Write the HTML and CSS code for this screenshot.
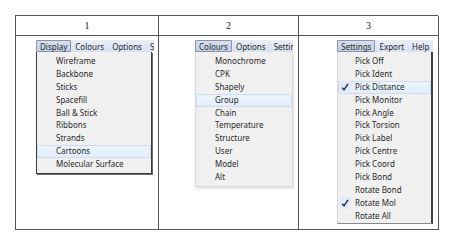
FILE: index.html
```html
<!DOCTYPE html>
<html lang="en">
<head>
    <meta charset="utf-8">
    <title>Menus</title>
    <link rel="stylesheet" href="styles.css">
</head>
<body>
    <div class="grid">
        <div class="head">1</div>
        <div class="head">2</div>
        <div class="head">3</div>

        <div class="cell cell-1">
            <div class="menu menu-1">
                <div class="bar">
                    <span class="top active">Display</span>
                    <span class="top">Colours</span>
                    <span class="top">Options</span>
                    <span class="top">Settings</span>
                </div>
                <div class="drop dark">
                    <div class="item">Wireframe</div>
                    <div class="item">Backbone</div>
                    <div class="item">Sticks</div>
                    <div class="item">Spacefill</div>
                    <div class="item">Ball &amp; Stick</div>
                    <div class="item">Ribbons</div>
                    <div class="item">Strands</div>
                    <div class="item hover">Cartoons</div>
                    <div class="item">Molecular Surface</div>
                </div>
            </div>
        </div>

        <div class="cell cell-2">
            <div class="menu menu-2">
                <div class="bar">
                    <span class="top active">Colours</span>
                    <span class="top">Options</span>
                    <span class="top">Settings</span>
                </div>
                <div class="drop soft">
                    <div class="item">Monochrome</div>
                    <div class="item">CPK</div>
                    <div class="item">Shapely</div>
                    <div class="item hover">Group</div>
                    <div class="item">Chain</div>
                    <div class="item">Temperature</div>
                    <div class="item">Structure</div>
                    <div class="item">User</div>
                    <div class="item">Model</div>
                    <div class="item">Alt</div>
                </div>
            </div>
        </div>

        <div class="cell cell-3">
            <div class="menu menu-3">
                <div class="bar">
                    <span class="top active">Settings</span>
                    <span class="top">Export</span>
                    <span class="top">Help</span>
                </div>
                <div class="drop side">
                    <div class="item">Pick Off</div>
                    <div class="item">Pick Ident</div>
                    <div class="item hover checked"><svg class="check" viewBox="0 0 8 8"><path d="M1 4.6 L3 6.8 L7 0.8" /></svg>Pick Distance</div>
                    <div class="item">Pick Monitor</div>
                    <div class="item">Pick Angle</div>
                    <div class="item">Pick Torsion</div>
                    <div class="item">Pick Label</div>
                    <div class="item">Pick Centre</div>
                    <div class="item">Pick Coord</div>
                    <div class="item">Pick Bond</div>
                    <div class="item">Rotate Bond</div>
                    <div class="item checked"><svg class="check" viewBox="0 0 8 8"><path d="M1 4.6 L3 6.8 L7 0.8" /></svg>Rotate Mol</div>
                    <div class="item">Rotate All</div>
                </div>
            </div>
        </div>
    </div>
</body>
</html>
```
FILE: styles.css
```css
body {
    margin: 0;
    background: #fff;
    font-family: 'Noto Sans', 'Open Sans', Arial, sans-serif;
    color: #2a2a2a;
}
.grid {
    margin: 15px 0 0 15px;
    width: 423px;
    display: grid;
    grid-template-columns: 143px 140px 140px;
    grid-template-rows: 20px 194px;
    border-top: 1px solid #555;
    border-left: 1px solid #555;
    box-sizing: border-box;
}
.head, .cell {
    border-right: 1px solid #555;
    border-bottom: 1px solid #555;
}
.head {
    display: flex;
    align-items: center;
    justify-content: center;
    font-family: 'Liberation Serif', serif;
    font-size: 10px;
    color: #222;
}
.cell {
    padding-top: 4px;
    overflow: hidden;
}
.cell-1 { padding-left: 20px; }
.cell-2 { padding-left: 36px; }
.cell-3 { padding-left: 38px; }
.menu {
    display: flex;
    flex-direction: column;
    font-size: 8px;
}
.menu-1 { width: 118px; }
.menu-2 { width: 98px; }
.menu-3 { width: 96px; }
.bar {
    display: flex;
    height: 12px;
    background: linear-gradient(180deg, #e8edf8 0%, #d9e1f1 100%);
    white-space: nowrap;
    overflow: hidden;
}
.top {
    padding: 0 3px;
    line-height: 11px;
    border: 1px solid transparent;
}
.top.active {
    background: linear-gradient(180deg, #d6dff0 0%, #c3cfe6 100%);
    border-color: #8793aa;
    border-radius: 1px;
}
.drop {
    background: #f0f0f0;
    padding: 3px 0 2px;
}
.drop.dark {
    width: 116px;
    border: 1px solid #3a3a3a;
    border-top: none;
    box-shadow: 1px 1px 0 #6a6a6a;
    box-sizing: border-box;
}
.drop.soft {
    border: 1px solid #d8d8d8;
    border-top: none;
    box-shadow: 1px 2px 3px rgba(0, 0, 0, 0.12);
}
.drop.side {
    border-left: 1px solid #d8d8d8;
    border-right: 2px solid #404040;
    border-bottom: 1px solid #8a8a8a;
    padding-bottom: 0;
}
.item {
    height: 12.9px;
    line-height: 12.9px;
    padding-left: 19px;
    position: relative;
    white-space: nowrap;
}
.menu-3 .item { padding-left: 17px; }
.item.hover {
    background: linear-gradient(180deg, #eef4fc 0%, #e2ecf9 100%);
    box-shadow: inset 0 0 0 1px #cddcf0;
}
.check {
    position: absolute;
    left: 3px;
    top: 2.5px;
    width: 8px;
    height: 8px;
    fill: none;
    stroke: #1d2b57;
    stroke-width: 1.4;
}
.checked::before {
    content: '';
    position: absolute;
    left: 1px;
    top: 0.5px;
    width: 12px;
    height: 11.5px;
    background: #e4ebf6;
}
```
